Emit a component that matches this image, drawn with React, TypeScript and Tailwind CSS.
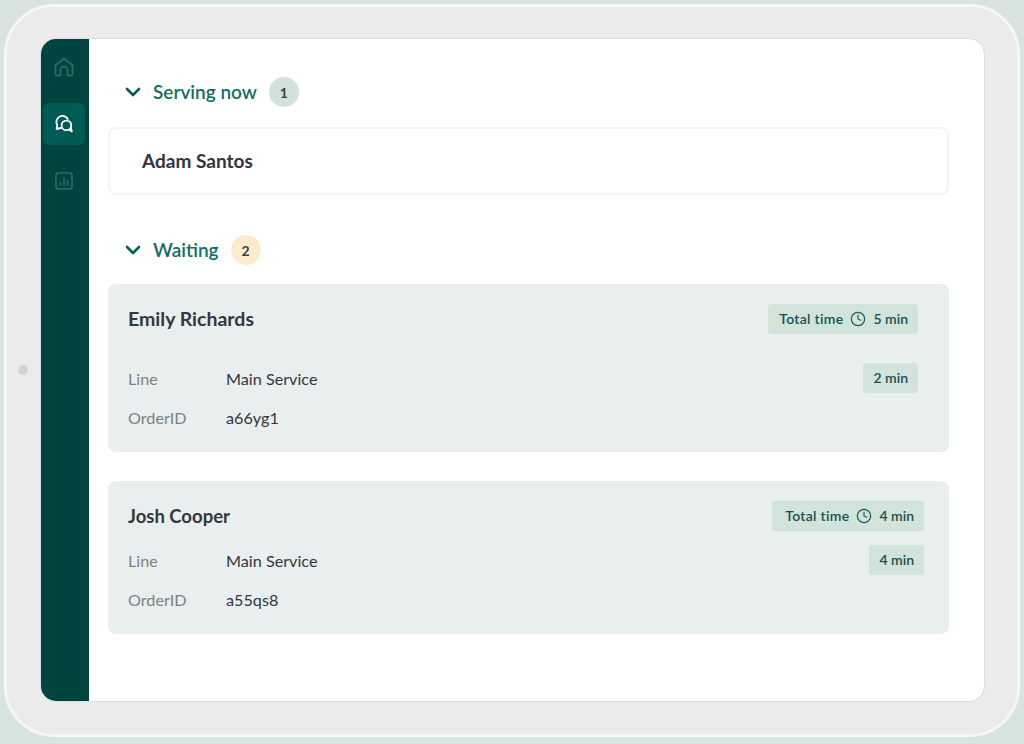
import { ChevronDown, Clock } from "lucide-react";

function HomeIcon() {
  return (
    <svg width="20" height="20" viewBox="0 0 20 20" fill="none" stroke="#2f6e69" strokeWidth="1.6" strokeLinecap="round" strokeLinejoin="round">
      <path d="M1.5 8.2 L10 1.5 L18.5 8.2 V16.5 A2 2 0 0 1 16.5 18.5 H13.5 V13 A3.5 3.5 0 0 0 6.5 13 V18.5 H3.5 A2 2 0 0 1 1.5 16.5 Z" />
    </svg>
  );
}

function ChatsIcon() {
  return (
    <svg width="18" height="18" viewBox="0 0 18 18" fill="none" stroke="currentColor" strokeWidth="1.8" strokeLinecap="round" strokeLinejoin="round">
      <path d="M5.8 13 L1.6 14 L2.2 10 A6 6 0 0 1 12.8 4" />
      <circle cx="11.4" cy="10.4" r="4.8" />
      <path d="M14 14.6 L16.8 16.4 L15.8 12.4" />
    </svg>
  );
}

function ChartIcon() {
  return (
    <svg width="18" height="18" viewBox="0 0 18 18" fill="none" stroke="#2f6e69" strokeWidth="1.5" strokeLinecap="round">
      <rect x="1" y="1" width="16" height="16" rx="2.5" />
      <path d="M5.5 13 V10.5 M9 13 V6 M12.5 13 V8.5" />
    </svg>
  );
}

function SectionHeader({ title, count, badge }: { title: string; count: number; badge: string }) {
  return (
    <div className="flex h-[30px] items-center pl-[13px]">
      <ChevronDown className="h-[24px] w-[24px] text-[#0a5c58]" strokeWidth={2.6} />
      <span className="ml-[8px] text-[19px] font-semibold text-[#156d68]">{title}</span>
      <span className={`ml-[12px] flex h-[30px] w-[30px] items-center justify-center rounded-full text-[14px] font-bold text-[#3a3f44] ${badge}`}>
        {count}
      </span>
    </div>
  );
}

function Pill({ children, className = "" }: { children: React.ReactNode; className?: string }) {
  return (
    <div className={`flex h-[30px] items-center rounded bg-[#d2e3dc] pb-[1px] text-[14px] font-semibold text-[#14514e] ${className}`}>
      {children}
    </div>
  );
}

function TotalTime({ min, className = "" }: { min: number; className?: string }) {
  return (
    <Pill className={`pr-[10px] ${className}`}>
      <span className="tracking-[0.3px]">Total time</span>
      <Clock className="mx-[7px] h-[16px] w-[16px] text-[#14615d]" strokeWidth={1.8} />
      {min} min
    </Pill>
  );
}

function Row({ label, value, children }: { label: string; value: string; children?: React.ReactNode }) {
  return (
    <div className="flex h-[30px] items-center text-[16.2px]">
      <span className="w-[98px] pt-[2px] text-[#7b8285]">{label}</span>
      <span className="pt-[2px] text-[#33373d]">{value}</span>
      {children}
    </div>
  );
}

export default function App() {
  return (
    <div className="relative h-[744px] w-[1024px] overflow-hidden bg-[#d7e5de] p-[4px] font-['Lato',sans-serif]">
      <div className="h-[733px] w-[1016px] rounded-[50px] border-[3px] border-[#f5f6f6] bg-[#ebebeb] pl-[33px] pt-[31px]">
        <div className="flex h-[664px] w-[945px] overflow-hidden rounded-[16px] border border-[#dcdddd] bg-white">
          <nav className="flex w-[48px] shrink-0 flex-col items-center bg-[#004440] pr-[2px]">
            <div className="flex h-[56px] items-center">
              <HomeIcon />
            </div>
            <div className="mt-[8px] flex h-[42px] w-[42px] items-center justify-center rounded-[6px] bg-[#005a55] text-white">
              <ChatsIcon />
            </div>
            <div className="mt-[26px] flex h-[20px] items-center">
              <ChartIcon />
            </div>
          </nav>

          <main className="w-[860px] pl-[19px] pt-[38px]">
            <SectionHeader title="Serving now" count={1} badge="bg-[#d0e2d9]" />
            <div className="mt-[20px] flex h-[68px] w-[841px] items-center rounded-[8px] border-2 border-[#f0f4f2] pl-[32px] text-[19px] font-bold text-[#33333f]">
              Adam Santos
            </div>

            <div className="mt-[40px]">
              <SectionHeader title="Waiting" count={2} badge="bg-[#fdeccb]" />
            </div>

            <section className="mt-[19px] h-[168px] w-[841px] rounded-[8px] bg-[#e9efee] pl-[20px] pr-[31px] pt-[20px]">
              <div className="flex h-[30px] items-center justify-between">
                <span className="text-[19.5px] font-bold text-[#33373f]">Emily Richards</span>
                <TotalTime min={5} className="pl-[11px]" />
              </div>
              <div className="mt-[29px]">
                <Row label="Line" value="Main Service">
                  <Pill className="ml-auto px-[10px]">2 min</Pill>
                </Row>
              </div>
              <div className="mt-[9px]">
                <Row label="OrderID" value="a66yg1" />
              </div>
            </section>

            <section className="mt-[29px] h-[153px] w-[841px] rounded-[8px] bg-[#e9efee] pl-[20px] pr-[25px] pt-[20px]">
              <div className="flex h-[30px] items-center justify-between">
                <span className="pt-[2px] text-[18.5px] font-bold text-[#33373f]">Josh Cooper</span>
                <TotalTime min={4} className="pl-[13px]" />
              </div>
              <div className="mt-[14px]">
                <Row label="Line" value="Main Service">
                  <Pill className="ml-auto px-[10px]">4 min</Pill>
                </Row>
              </div>
              <div className="mt-[9px]">
                <Row label="OrderID" value="a55qs8" />
              </div>
            </section>
          </main>
        </div>
      </div>
      <div className="absolute left-[18px] top-[365px] h-[10px] w-[10px] rounded-full bg-[#d2d2d2]" />
    </div>
  );
}
